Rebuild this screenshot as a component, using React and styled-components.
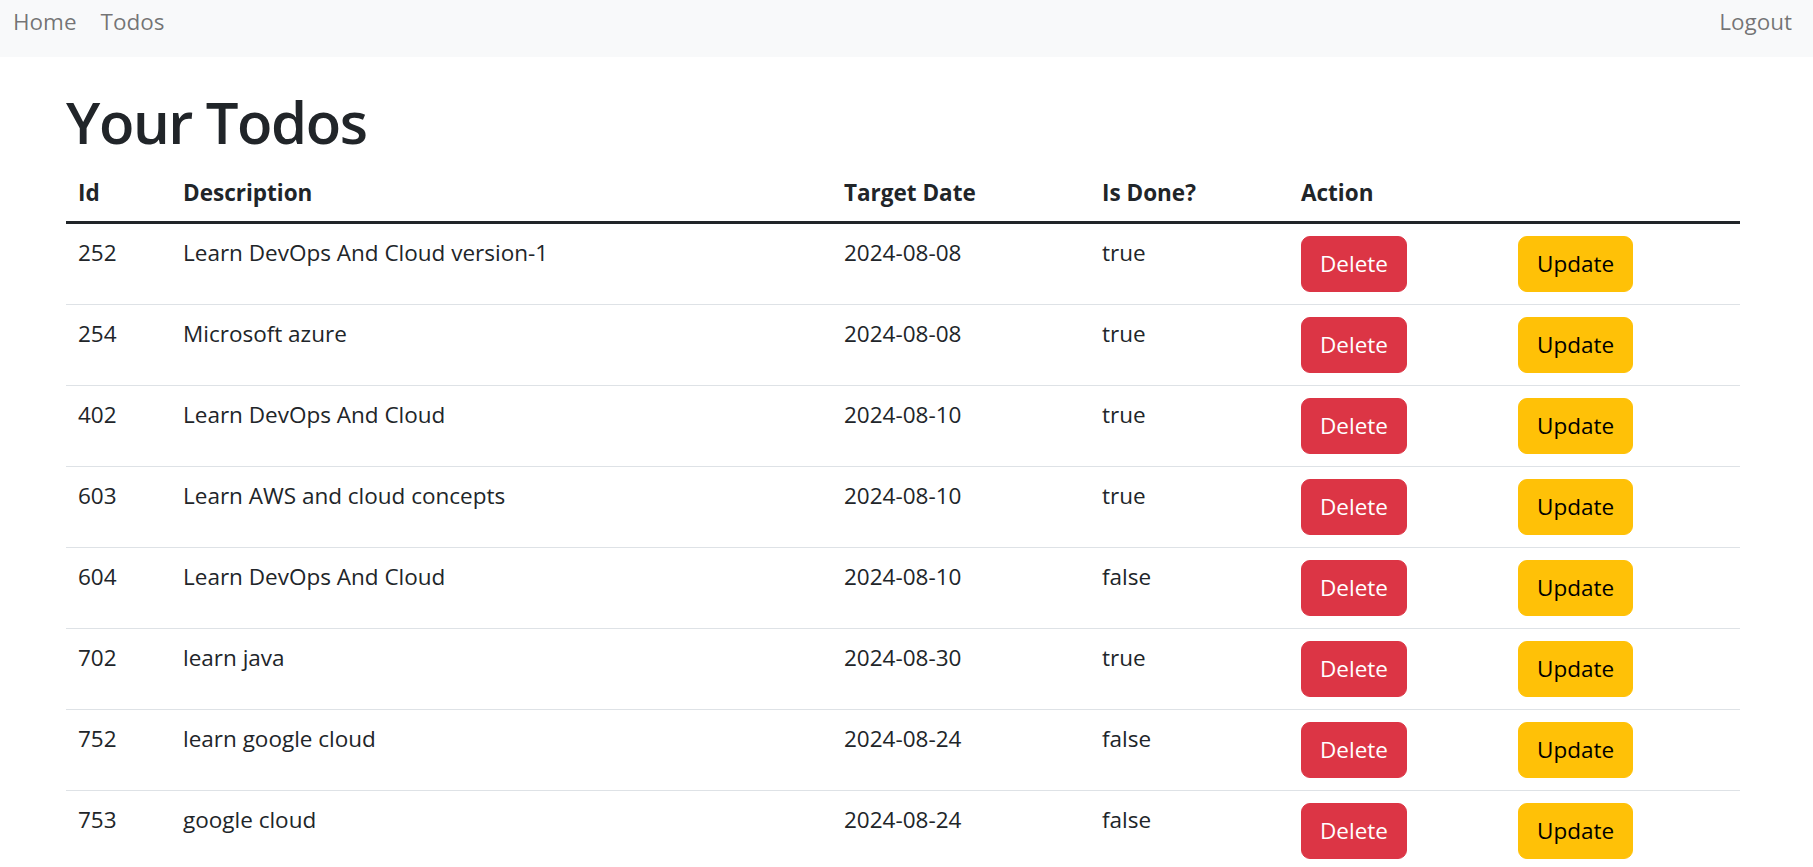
import React from 'react';
import styled, { createGlobalStyle } from 'styled-components';

const GlobalStyle = createGlobalStyle`
    html, body {
        margin: 0;
        overflow: hidden;
    }
    body {
        font-family: "Open Sans", "Noto Sans", sans-serif;
        font-size: 24px;
        line-height: 1.5;
        color: #212529;
        background: #fff;
    }
`;

const Navbar = styled.nav`
    display: flex;
    justify-content: space-between;
    align-items: flex-start;
    height: 57px;
    padding: 4px 9px 0 1px;
    box-sizing: border-box;
    background-color: #f8f9fa;
`;
const NavList = styled.div`
    display: flex;
`;
const NavLink = styled.a`
    padding: 0 12px;
    font-size: 22.5px;
    line-height: 36px;
    color: rgba(0, 0, 0, 0.55);
    text-decoration: none;
    cursor: pointer;
`;
const Main = styled.main`
    width: 1674px;
    padding: 30px 0 0 66px;
`;
const Title = styled.h1`
    margin: 0 0 9px;
    font-size: 58px;
    font-weight: 600;
    line-height: 1.2;
    letter-spacing: -1.4px;
`;
const Table = styled.table`
    width: 100%;
    border-collapse: collapse;
    table-layout: fixed;
`;
const HeadRow = styled.tr`
    border-bottom: 3px solid #212529;
`;
const Th = styled.th`
    padding: 10px 12px 12px;
    font-size: 22.5px;
    font-weight: 700;
    text-align: left;
    vertical-align: bottom;
`;
const Row = styled.tr`
    border-bottom: 1px solid #dee2e6;
`;
const Td = styled.td`
    padding: 12px;
    font-size: 22.5px;
    vertical-align: top;
`;
const Button = styled.button`
    height: 56px;
    padding: 0 18px;
    border: 1.5px solid ${props => props.variant === 'danger' ? '#dc3545' : '#ffc107'};
    border-radius: 9px;
    background-color: ${props => props.variant === 'danger' ? '#dc3545' : '#ffc107'};
    color: ${props => props.variant === 'danger' ? '#fff' : '#000'};
    font-family: inherit;
    font-size: 22.5px;
    line-height: 36px;
    cursor: pointer;
`;

const todos = [
    { id: 252, description: 'Learn DevOps And Cloud version-1', targetDate: '2024-08-08', done: true },
    { id: 254, description: 'Microsoft azure', targetDate: '2024-08-08', done: true },
    { id: 402, description: 'Learn DevOps And Cloud', targetDate: '2024-08-10', done: true },
    { id: 603, description: 'Learn AWS and cloud concepts', targetDate: '2024-08-10', done: true },
    { id: 604, description: 'Learn DevOps And Cloud', targetDate: '2024-08-10', done: false },
    { id: 702, description: 'learn java', targetDate: '2024-08-30', done: true },
    { id: 752, description: 'learn google cloud', targetDate: '2024-08-24', done: false },
    { id: 753, description: 'google cloud', targetDate: '2024-08-24', done: false },
];

const columns = [105, 661, 258, 199, 217, 234];

const App = () => {
    return (
        <>
            <GlobalStyle />
            <Navbar>
                <NavList>
                    <NavLink>Home</NavLink>
                    <NavLink>Todos</NavLink>
                </NavList>
                <NavList>
                    <NavLink>Logout</NavLink>
                </NavList>
            </Navbar>
            <Main>
                <Title>Your Todos</Title>
                <Table>
                    <colgroup>
                        {columns.map((w, i) => <col key={`col${i}`} style={{ width: w }} />)}
                    </colgroup>
                    <thead>
                        <HeadRow>
                            <Th>Id</Th>
                            <Th>Description</Th>
                            <Th>Target Date</Th>
                            <Th>Is Done?</Th>
                            <Th>Action</Th>
                            <Th></Th>
                        </HeadRow>
                    </thead>
                    <tbody>
                        {todos.map(({ id, description, targetDate, done }) => (
                            <Row key={id}>
                                <Td>{id}</Td>
                                <Td>{description}</Td>
                                <Td>{targetDate}</Td>
                                <Td>{done.toString()}</Td>
                                <Td><Button variant='danger'>Delete</Button></Td>
                                <Td><Button variant='warning'>Update</Button></Td>
                            </Row>
                        ))}
                    </tbody>
                </Table>
            </Main>
        </>
    );
};

export default App;
